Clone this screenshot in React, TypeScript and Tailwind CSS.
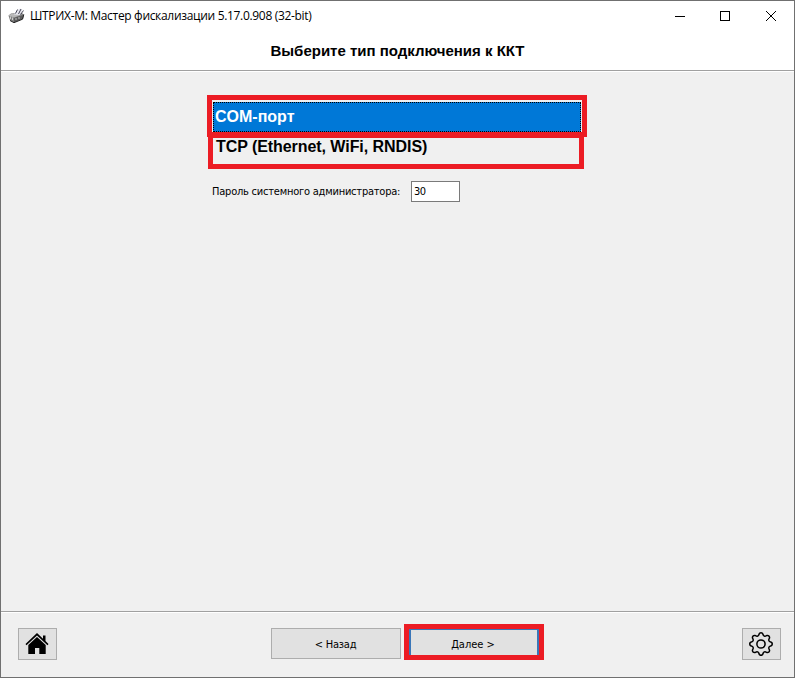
import type { ReactNode } from 'react';
import { BsGear } from 'react-icons/bs';

function PrinterIcon() {
  return (
    <svg width="18" height="16" viewBox="0 0 18 16">
      <path d="M0.5 7.5 L3 5.5 L13 4.5 L16 6.5 L15 11 L6 14.5 L2 12.5 Z" fill="#808080" />
      <path d="M0.5 7.5 L4 5.5 L14 6.5 L6 9.5 Z" fill="#b8b8b8" />
      <path d="M6 10 L15 7 L14.5 10.5 L6 14.5 Z" fill="#5c5c5c" />
      <path d="M6 6.5 L8.5 2.5 L12 0.5 L15 2 L12 7 Z" fill="#e6e6ee" />
      <path d="M7.5 5.5 L9.5 1.5 M10.5 6 L13 1 M12.5 6.5 L15.5 2.5" stroke="#334" strokeWidth="0.9" />
      <path d="M2 12.5 L6 14.7 L14.5 11.2 L15.8 6.5" stroke="#222" strokeWidth="1" fill="none" />
      <path d="M2.5 8.5 V11 M4.5 9.5 V12 M8 10 V12 M11 9 V11" stroke="#ddd" strokeWidth="0.8" />
    </svg>
  );
}

function HomeIcon() {
  return (
    <svg width="24" height="24" viewBox="0 0 24 24">
      <path d="M12 1 L18 6.7 V3.5 H20.5 V9.1 L23.5 12 L22.5 13.2 L12 3.4 L1.5 13.2 L0.5 12 Z" fill="#000" />
      <path d="M3.3 13.1 L12 5 L20.7 13.1 V22 H14.3 V16 H10 V22 H3.3 Z" fill="#000" />
    </svg>
  );
}

function IconButton({ label, children }: { label: string; children: ReactNode }) {
  return (
    <button
      aria-label={label}
      className="flex h-8 w-[39px] items-center justify-center border border-[#adadad] bg-[#e1e1e1] pr-[1px]"
    >
      {children}
    </button>
  );
}

function TitleBar() {
  return (
    <div className="flex h-[29px] items-center justify-between pl-[7px]">
      <div className="flex items-center gap-1">
        <PrinterIcon />
        <span className="whitespace-nowrap font-['Open_Sans','Noto_Sans',sans-serif] text-[12px] leading-4 tracking-[-0.32px]">
          ШТРИХ-М: Мастер фискализации 5.17.0.908 (32-bit)
        </span>
      </div>
      <svg width="102" height="12" viewBox="0 0 102 12" className="mr-[17px]" fill="none" stroke="#000">
        <path d="M0 6.5 H10" />
        <rect x="45.5" y="1.5" width="9" height="9" />
        <path d="M91 1 L101 11 M101 1 L91 11" />
      </svg>
    </div>
  );
}

export default function App() {
  return (
    <div className="flex h-[678px] w-[795px] flex-col border border-[#707070] bg-[#f0f0f0] font-['DejaVu_Sans_Condensed','Noto_Sans',sans-serif] text-[11px] tracking-[-0.22px] text-black">
      <header className="h-[70px] border-b border-[#a0a0a0] bg-white">
        <TitleBar />
        <h1 className="pt-3 text-center font-['Liberation_Sans',sans-serif] text-[15px] font-bold leading-[18px] tracking-normal">
          Выберите тип подключения к ККТ
        </h1>
      </header>

      <main className="flex-1 border-t border-white pl-[206px] pt-[23px]">
        <div className="h-[42px] w-[380px] border-[5px] border-[#ec1c24] pl-[1px] pt-[2px]">
          <div className="h-[30px] w-[368px] border border-dotted border-black bg-[#0078d7] pl-[1px] font-['Liberation_Sans',sans-serif] text-[16px] font-bold leading-[28px] tracking-normal text-white">
            COM-порт
          </div>
        </div>
        <div className="-mt-1 ml-[1px] h-9 w-[376px] border-[5px] border-[#ec1c24] pl-[3px] font-['Liberation_Sans',sans-serif] text-[16px] font-bold leading-[17px] tracking-[-0.06px]">
          TCP (Ethernet, WiFi, RNDIS)
        </div>
        <div className="mt-3 flex items-center pl-[5px]">
          <label className="w-[199px] whitespace-nowrap pt-[2px]">Пароль системного администратора:</label>
          <input
            defaultValue="30"
            className="h-[21px] w-[49px] border border-[#7a7a7a] bg-white pl-[2px] tracking-[-0.5px] outline-none"
          />
        </div>
      </main>

      <footer className="flex h-[66px] items-start border-t border-[#a0a0a0] pl-[17px] pr-[13px] shadow-[inset_0_1px_0_white]">
        <div className="pt-4">
          <IconButton label="Домой">
            <HomeIcon />
          </IconButton>
        </div>
        <div className="ml-[214px] flex items-start gap-[3px] pt-3">
          <button className="mt-1 h-[31px] w-[130px] border border-[#adadad] bg-[#e1e1e1] pr-[1px] pt-1">&lt; Назад</button>
          <div className="h-9 w-[140px] border-[5px] border-[#ec1c24]">
            <button className="h-[26px] w-[130px] border-x-2 border-t border-[#3976b8] bg-[#e1e1e1] pr-[2px] pt-[6px] tracking-normal">
              Далее &gt;
            </button>
          </div>
        </div>
        <div className="ml-auto pt-4">
          <IconButton label="Настройки">
            <BsGear size={24} />
          </IconButton>
        </div>
      </footer>
    </div>
  );
}
